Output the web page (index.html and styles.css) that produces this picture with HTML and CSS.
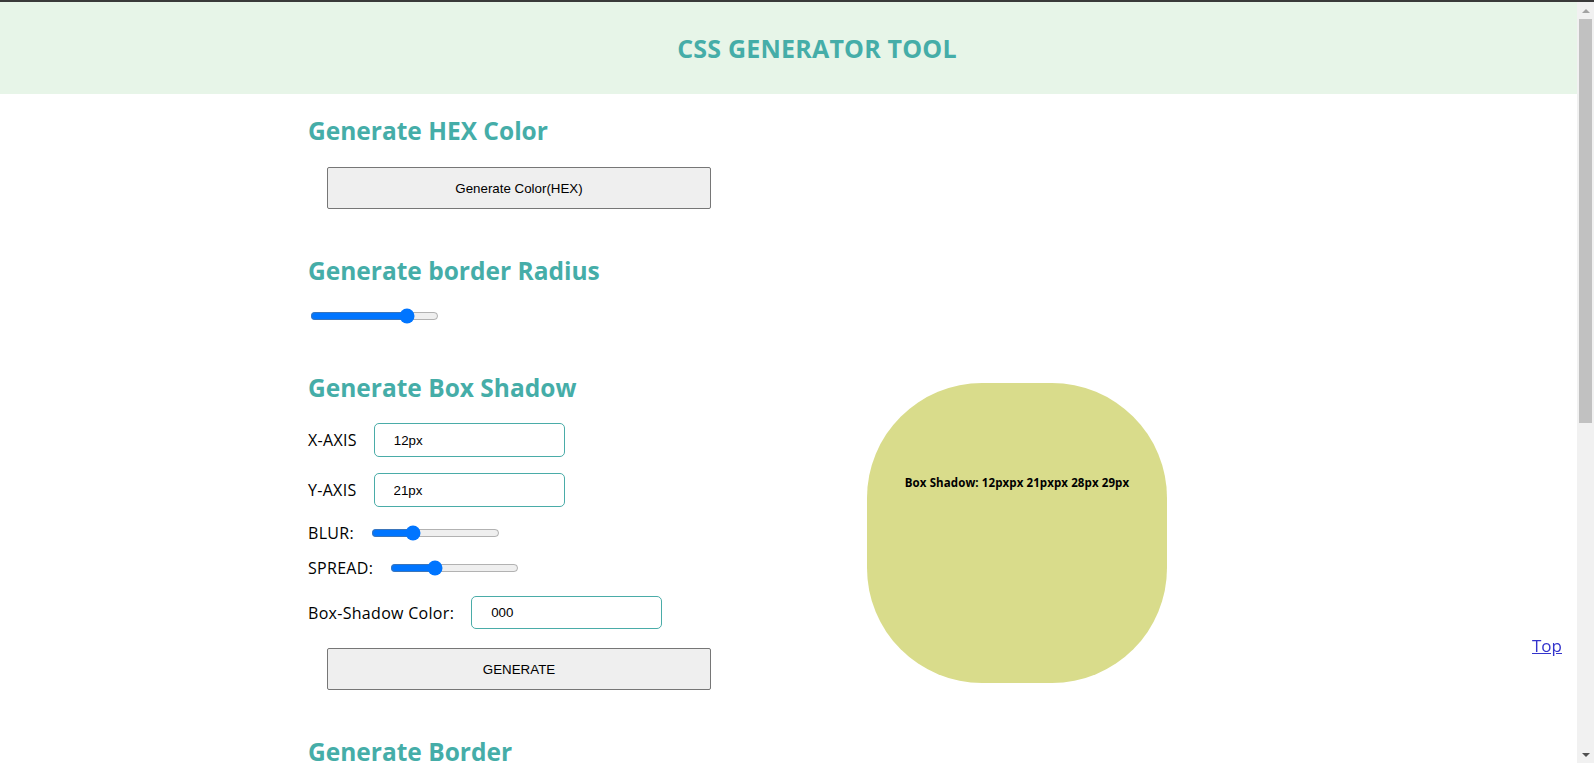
FILE: index.html
```html
<!DOCTYPE html>
<html lang="en">
<head>
<meta charset="utf-8">
<title>CSS Generator Tool</title>
<link rel="stylesheet" href="styles.css">
</head>
<body>
<header class="site-header">
  <h1 class="site-title">CSS GENERATOR TOOL</h1>
</header>
<main class="layout">
  <div class="controls">
    <section class="tool">
      <h2 class="tool-title">Generate HEX Color</h2>
      <button class="wide-btn" type="button">Generate Color(HEX)</button>
    </section>
    <section class="tool">
      <h2 class="tool-title">Generate border Radius</h2>
      <input class="range range-radius" type="range" min="0" max="150" value="118">
    </section>
    <section class="tool">
      <h2 class="tool-title">Generate Box Shadow</h2>
      <div class="field field-input">
        <label class="field-label">X-AXIS</label>
        <input class="text-input" type="text" value="12px">
      </div>
      <div class="field field-input">
        <label class="field-label">Y-AXIS</label>
        <input class="text-input" type="text" value="21px">
      </div>
      <div class="field field-range">
        <label class="field-label">BLUR:</label>
        <input class="range" type="range" min="0" max="100" value="30">
      </div>
      <div class="field field-range">
        <label class="field-label">SPREAD:</label>
        <input class="range" type="range" min="0" max="100" value="33">
      </div>
      <div class="field field-input field-color">
        <label class="field-label">Box-Shadow Color:</label>
        <input class="text-input" type="text" value="000">
      </div>
      <button class="wide-btn" type="button">GENERATE</button>
    </section>
    <section class="tool tool-border">
      <h2 class="tool-title">Generate Border</h2>
      <div class="field field-input">
        <label class="field-label">WIDTH</label>
        <input class="text-input" type="text" value="2px">
      </div>
      <div class="field field-input">
        <label class="field-label">STYLE</label>
        <input class="text-input" type="text" value="solid">
      </div>
      <div class="field field-input field-color">
        <label class="field-label">Border Color:</label>
        <input class="text-input" type="text" value="000">
      </div>
      <button class="wide-btn" type="button">GENERATE</button>
    </section>
  </div>
  <div class="preview">
    <div class="preview-box">
      <p class="preview-text">Box Shadow: 12pxpx 21pxpx 28px 29px</p>
    </div>
  </div>
</main>
<a class="top-link" href="#">Top</a>
<div class="scrollbar" aria-hidden="true">
  <span class="sb-arrow sb-up"></span>
  <span class="sb-thumb"></span>
  <span class="sb-track"></span>
  <span class="sb-arrow sb-down"></span>
</div>
</body>
</html>
```
FILE: styles.css
```css
html, body {
  margin: 0;
  padding: 0;
}

body {
  font-family: "Open Sans", "DejaVu Sans", sans-serif;
  color: #000;
  background: #fff;
}

.site-header {
  border-top: 2px solid #3a3a3a;
  background: #e7f5e8;
  height: 92px;
  display: flex;
  align-items: center;
  justify-content: center;
  padding-left: 40px;
}

.site-title {
  margin: 0;
  font-size: 25px;
  font-weight: 700;
  color: #45ada8;
  letter-spacing: 0.2px;
}

.layout {
  box-sizing: border-box;
  min-height: 1279px;
  display: flex;
  align-items: flex-start;
  padding-left: 308px;
}

.controls {
  width: 420px;
  display: flex;
  flex-direction: column;
}

.tool {
  display: flex;
  flex-direction: column;
  align-items: flex-start;
}

.tool-title {
  margin: 23px 0 0;
  font-size: 24.5px;
  line-height: 28px;
  font-weight: 700;
  color: #45ada8;
}

.tool + .tool .tool-title {
  margin-top: 48px;
}

.tool-border .tool-title {
  margin-top: 49px;
}

.wide-btn {
  margin: 22px 0 0 19px;
  width: 384px;
  height: 42px;
  border: 1px solid #767676;
  border-radius: 2px;
  background: #efefef;
  font-family: "Liberation Sans", Arial, sans-serif;
  font-size: 13.33px;
  color: #000;
}

.field + .wide-btn {
  margin-top: 19px;
}

.range {
  margin: 0 2px;
  width: 129px;
  height: 16px;
  accent-color: #0075ff;
}

.range-radius {
  margin-top: 23px;
  margin-bottom: 2px;
}

.field {
  display: flex;
  align-items: center;
  gap: 17px;
  font-size: 16px;
  letter-spacing: 0.3px;
}

.field-label {
  line-height: 20px;
}

.field-input {
  margin-top: 16px;
}

.tool-title + .field {
  margin-top: 21px;
}

.field-range {
  margin-top: 16px;
  gap: 15px;
}

.field-range + .field-range {
  margin-top: 15px;
}

.field-color {
  margin-top: 18px;
}

.text-input {
  box-sizing: border-box;
  width: 191px;
  height: 34px;
  border: 1px solid #4aaca8;
  border-radius: 5px;
  padding: 0 0 0 19px;
  font-family: "Liberation Sans", Arial, sans-serif;
  font-size: 13.33px;
  letter-spacing: 0;
  color: #000;
  background: #fff;
}

.field-color .text-input {
  height: 33px;
}

.preview {
  margin-left: 139px;
  padding-top: 289px;
}

.preview-box {
  width: 300px;
  height: 300px;
  border-radius: 115px;
  background: #d9dc8b;
  box-sizing: border-box;
  padding-top: 92px;
}

.preview-text {
  margin: 0;
  text-align: center;
  font-size: 11.5px;
  font-weight: 700;
  line-height: 16px;
  letter-spacing: 0.1px;
}

.top-link {
  position: fixed;
  right: 32px;
  bottom: 106px;
  font-size: 17px;
  color: #3333cc;
}

/* classic window scrollbar drawn over the right edge */
.scrollbar {
  position: fixed;
  top: 2px;
  right: 0;
  bottom: 0;
  width: 17px;
  background: #f1f1f1;
  display: flex;
  flex-direction: column;
  align-items: center;
}

.sb-arrow {
  flex: 0 0 17px;
  width: 17px;
  display: flex;
  align-items: center;
  justify-content: center;
}

.sb-arrow::before {
  content: "";
  width: 0;
  height: 0;
  border-left: 4px solid transparent;
  border-right: 4px solid transparent;
}

.sb-up::before {
  border-bottom: 4px solid #a3a3a3;
}

.sb-down::before {
  border-top: 4px solid #505050;
}

.sb-thumb {
  flex: 0 0 404px;
  width: 13px;
  background: #c1c1c1;
}

.sb-track {
  flex: 1;
}
```
